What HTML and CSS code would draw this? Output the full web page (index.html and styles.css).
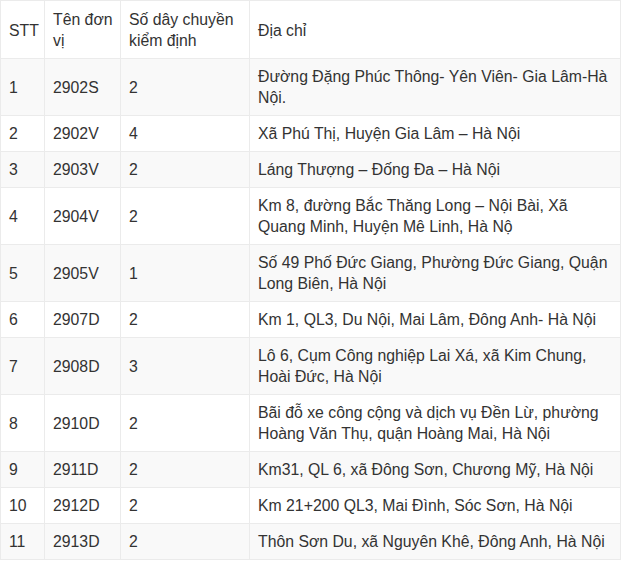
FILE: index.html
```html
<!DOCTYPE html>
<html lang="vi">
<head>
<meta charset="utf-8">
<title>Danh sách đơn vị đăng kiểm</title>
<link rel="stylesheet" href="styles.css">
</head>
<body>
<table class="list">
  <colgroup>
    <col class="c-stt">
    <col class="c-name">
    <col class="c-count">
    <col class="c-addr">
  </colgroup>
  <thead>
    <tr><td>STT</td><td>Tên đơn vị</td><td>Số dây chuyền kiểm định</td><td>Địa chỉ</td></tr>
  </thead>
  <tbody>
    <tr><td>1</td><td>2902S</td><td>2</td><td>Đường Đặng Phúc Thông- Yên Viên- Gia Lâm-Hà Nội.</td></tr>
    <tr><td>2</td><td>2902V</td><td>4</td><td>Xã Phú Thị, Huyện Gia Lâm – Hà Nội</td></tr>
    <tr><td>3</td><td>2903V</td><td>2</td><td>Láng Thượng – Đống Đa – Hà Nội</td></tr>
    <tr><td>4</td><td>2904V</td><td>2</td><td>Km 8, đường Bắc Thăng Long – Nội Bài, Xã Quang Minh, Huyện Mê Linh, Hà Nộ</td></tr>
    <tr><td>5</td><td>2905V</td><td>1</td><td>Số 49 Phố Đức Giang, Phường Đức Giang, Quận Long Biên, Hà Nội</td></tr>
    <tr><td>6</td><td>2907D</td><td>2</td><td>Km 1, QL3, Du Nội, Mai Lâm, Đông Anh- Hà Nội</td></tr>
    <tr><td>7</td><td>2908D</td><td>3</td><td>Lô 6, Cụm Công nghiệp Lai Xá, xã Kim Chung, Hoài Đức, Hà Nội</td></tr>
    <tr><td>8</td><td>2910D</td><td>2</td><td>Bãi đỗ xe công cộng và dịch vụ Đền Lừ, phường Hoàng Văn Thụ, quận Hoàng Mai, Hà Nội</td></tr>
    <tr><td>9</td><td>2911D</td><td>2</td><td>Km31, QL 6, xã Đông Sơn, Chương Mỹ, Hà Nội</td></tr>
    <tr><td>10</td><td>2912D</td><td>2</td><td>Km 21+200 QL3, Mai Đình, Sóc Sơn, Hà Nội</td></tr>
    <tr><td>11</td><td>2913D</td><td>2</td><td>Thôn Sơn Du, xã Nguyên Khê, Đông Anh, Hà Nội</td></tr>
  </tbody>
</table>
</body>
</html>
```
FILE: styles.css
```css
html, body {
  margin: 0;
  padding: 0;
  background: #fff;
}
.list {
  width: 620px;
  table-layout: fixed;
  border-collapse: collapse;
  font-family: "Liberation Sans", Arial, sans-serif;
  font-size: 15.8px;
  line-height: 21px;
  color: #333;
}
.c-stt { width: 44px; }
.c-name { width: 76px; }
.c-count { width: 129px; }
.c-addr { width: 371px; }
.list td {
  border: 1px solid #ebebeb;
  padding: 7px 4px 7px 8px;
  vertical-align: middle;
  text-align: left;
}
.list thead td {
  padding-top: 8px;
}
.list tbody tr:nth-child(odd) {
  background: #f9f9f9;
}
```
